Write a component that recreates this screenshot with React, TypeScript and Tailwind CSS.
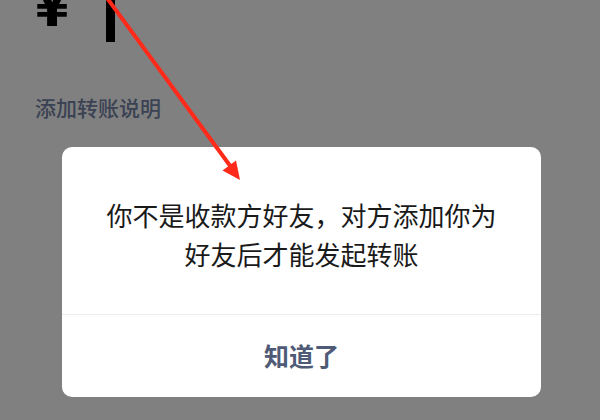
export default function App() {
  return (
    <div
      className="relative h-[420px] w-[600px] overflow-hidden bg-[#808080]"
      style={{ fontFamily: '"Noto Sans CJK SC", "Noto Sans", sans-serif' }}
    >
      {/* amount row, cut off at the top */}
      <div className="flex h-[42px] items-start overflow-hidden pl-[35px]">
        <span className="-mt-[26px] text-[56px] font-black leading-none text-black">¥</span>
        <div className="ml-[37px] h-[42px] w-[9px] bg-black" />
      </div>

      <div className="mt-[53px] pl-[35px] text-[21px] font-medium leading-[24px] text-[#3a4253]">添加转账说明</div>

      <div className="mx-[62px] mt-[28px] w-[479px] overflow-hidden rounded-[10px] bg-white">
        <div className="px-6 pb-[41px] pt-[48px] text-center text-[26px] leading-[39px] text-[#1a1a1a]">
          <p>你不是收款方好友，对方添加你为</p>
          <p>好友后才能发起转账</p>
        </div>
        <div className="flex h-[83px] items-center justify-center border-t border-[#ececec] text-[25px] font-semibold text-[#4f5b76]">
          知道了
        </div>
      </div>

      {/* red annotation arrow */}
      <svg className="pointer-events-none absolute left-0 top-0" width="600" height="420" viewBox="0 0 600 420">
        <line x1="107" y1="-2" x2="231" y2="167" stroke="#ff2a1a" strokeWidth="4" />
        <polygon points="240,180 222.5,170.5 236,160.5" fill="#ff2a1a" />
      </svg>
    </div>
  )
}
